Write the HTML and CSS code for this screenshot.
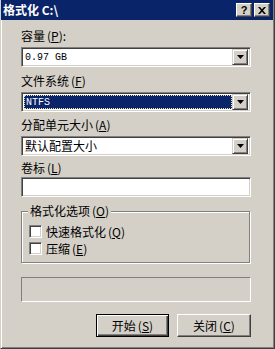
FILE: index.html
```html
<!DOCTYPE html>
<html lang="zh-CN">
<head>
<meta charset="utf-8">
<title>格式化 C:\</title>
<link rel="stylesheet" href="styles.css">
</head>
<body>
<div class="window">
  <div class="titlebar">
    <span class="title">格式化 C:\</span>
    <div class="tbtns">
      <span class="tbtn help">?</span>
      <span class="tbtn">
        <svg width="8" height="7" viewBox="0 0 8 7"><path d="M0 0h2l2 2.3L6 0h2L5 3.5 8 7H6L4 4.7 2 7H0l3-3.5z" fill="#000"/></svg>
      </span>
    </div>
  </div>
  <div class="content">
    <div class="field f1">
      <div class="lbl">容量<span class="mn">(<u>P</u>):</span></div>
      <div class="combo">
        <div class="cval mono">0.97 GB</div>
        <div class="arrow"><svg width="7" height="4" viewBox="0 0 7 4"><path d="M0 0h7L3.5 4z" fill="#000"/></svg></div>
      </div>
    </div>
    <div class="field f2">
      <div class="lbl">文件系统<span class="mn">(<u>F</u>)</span></div>
      <div class="combo">
        <div class="cval"><span class="sel mono">NTFS</span></div>
        <div class="arrow"><svg width="7" height="4" viewBox="0 0 7 4"><path d="M0 0h7L3.5 4z" fill="#000"/></svg></div>
      </div>
    </div>
    <div class="field f3">
      <div class="lbl">分配单元大小<span class="mn">(<u>A</u>)</span></div>
      <div class="combo">
        <div class="cval">默认配置大小</div>
        <div class="arrow"><svg width="7" height="4" viewBox="0 0 7 4"><path d="M0 0h7L3.5 4z" fill="#000"/></svg></div>
      </div>
    </div>
    <div class="field f4">
      <div class="lbl">卷标<span class="mn">(<u>L</u>)</span></div>
      <div class="input"></div>
    </div>
    <div class="group">
      <span class="legend">格式化选项<span class="mn">(<u>O</u>)</span></span>
      <div class="check"><span class="box"></span><span>快速格式化<span class="mn">(<u>Q</u>)</span></span></div>
      <div class="check"><span class="box"></span><span>压缩<span class="mn">(<u>E</u>)</span></span></div>
    </div>
    <div class="progress"></div>
    <div class="buttons">
      <div class="btn default"><span>开始<span class="mn">(<u>S</u>)</span></span></div>
      <div class="btn"><span>关闭<span class="mn">(<u>C</u>)</span></span></div>
    </div>
  </div>
</div>
</body>
</html>
```
FILE: styles.css
```css
html, body {
  margin: 0;
  padding: 0;
  background: #d4d0c8;
}
.window {
  width: 275px;
  height: 349px;
  box-sizing: border-box;
  background: #d4d0c8;
  border-left: 1px solid #d4d0c8;
  border-right: 1px solid #404040;
  border-bottom: 1px solid #404040;
  box-shadow: inset 1px 0 #fff, inset -1px -1px #808080;
  display: flex;
  flex-direction: column;
  font: 12px "Noto Sans CJK SC", "Liberation Sans", sans-serif;
  color: #000;
}
.titlebar {
  height: 20px;
  flex: none;
  margin-right: 1px;
  background: #0a246a;
  display: flex;
  align-items: center;
  justify-content: space-between;
  padding: 0 3px 0 2px;
}
.title {
  color: #fff;
  font-weight: bold;
  font-size: 12px;
  line-height: 14px;
}
.tbtns {
  display: flex;
  gap: 2px;
}
.tbtn {
  width: 16px;
  height: 14px;
  box-sizing: border-box;
  background: #d4d0c8;
  border: 1px solid;
  border-color: #fff #404040 #404040 #fff;
  box-shadow: inset -1px -1px #808080;
  display: flex;
  align-items: center;
  justify-content: center;
}
.tbtn.help {
  font: bold 11px "Liberation Sans", sans-serif;
  line-height: 12px;
}
.mn {
  margin-left: 2px;
}
.content {
  display: flex;
  flex-direction: column;
  padding: 0 23px 0 20px;
}
.field {
  display: flex;
  flex-direction: column;
}
.lbl {
  height: 14px;
  line-height: 14px;
  margin-bottom: 4px;
}
.f1 { margin-top: 9px; }
.f2 { margin-top: 7px; }
.f3 { margin-top: 6px; }
.f4 { margin-top: 5px; }
.f4 .lbl { margin-bottom: 2px; }
.combo, .input {
  height: 20px;
  box-sizing: border-box;
  background: #fff;
  border: 1px solid;
  border-color: #808080 #fff #fff #808080;
  box-shadow: inset 1px 1px #404040, inset -1px -1px #d4d0c8;
  display: flex;
  padding: 2px;
}
.cval {
  flex: 1;
  display: flex;
  align-items: center;
  padding-left: 1px;
  line-height: 14px;
}
.mono {
  font: 10px "Liberation Mono", monospace;
}
.sel {
  flex: 1;
  align-self: stretch;
  margin-left: -1px;
  background: #0a246a;
  color: #fff;
  border: 1px dotted #e8e8a0;
  display: flex;
  align-items: center;
  padding-left: 1px;
}
.arrow {
  width: 16px;
  box-sizing: border-box;
  margin: -1px 0 -1px 0;
  background: #d4d0c8;
  border: 1px solid;
  border-color: #d4d0c8 #404040 #404040 #d4d0c8;
  box-shadow: inset 1px 1px #fff, inset -1px -1px #808080;
  display: flex;
  align-items: center;
  justify-content: center;
}
.group {
  position: relative;
  margin-top: 14px;
  margin-right: 1px;
  height: 52px;
  box-sizing: border-box;
  border: 1px solid #808080;
  box-shadow: inset 1px 1px #fff, 1px 1px #fff;
  padding: 13px 0 0 7px;
  display: flex;
  flex-direction: column;
  gap: 4px;
}
.legend {
  position: absolute;
  top: -8px;
  left: 6px;
  padding: 0 2px;
  background: #d4d0c8;
  line-height: 14px;
}
.check {
  display: flex;
  align-items: center;
  gap: 4px;
  height: 13px;
  line-height: 14px;
}
.box {
  width: 13px;
  height: 13px;
  box-sizing: border-box;
  background: #fff;
  border: 1px solid;
  border-color: #808080 #fff #fff #808080;
  box-shadow: inset 1px 1px #404040, inset -1px -1px #d4d0c8;
}
.progress {
  margin-top: 14px;
  height: 25px;
  box-sizing: border-box;
  border: 1px solid;
  border-color: #808080 #fff #fff #808080;
}
.buttons {
  margin-top: 12px;
  display: flex;
  justify-content: flex-end;
  gap: 8px;
}
.btn {
  width: 74px;
  height: 23px;
  box-sizing: border-box;
  border: 1px solid;
  border-color: #fff #404040 #404040 #fff;
  box-shadow: inset -1px -1px #808080;
  display: flex;
  align-items: center;
  justify-content: center;
  line-height: 14px;
}
.btn.default {
  width: 73px;
  border: 1px solid #000;
  box-shadow: inset 1px 1px #fff, inset -1px -1px #404040, inset -2px -2px #808080;
}
```
